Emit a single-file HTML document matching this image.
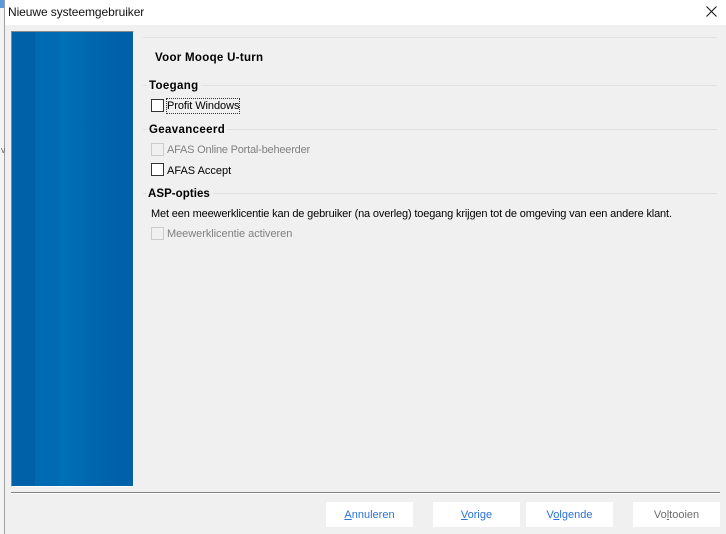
<!DOCTYPE html>
<html><head><meta charset="utf-8">
<style>
html,body{margin:0;padding:0;width:726px;height:534px;overflow:hidden;background:#fff}
body{position:relative;font-family:"Liberation Sans",sans-serif;font-size:11px;color:#000}
.a{position:absolute;white-space:nowrap;line-height:14px}
.l{position:absolute;background:#e0e0e0;height:1px}
.b{font-weight:bold;font-size:11.5px;letter-spacing:.35px}
.g{color:#808080}
.c{position:absolute;width:11px;height:11px;border:1px solid #333;background:#fff}
.c.d{border-color:#ccc;background:#f0f0f0}
.btn{position:absolute;top:502px;width:87px;height:25px;background:#fff;text-align:center;line-height:26px;color:#2a72d8}
u{text-underline-offset:1px}
</style></head><body>
<div style="position:absolute;left:0;top:0;width:4px;height:534px;background:#f4f4f4"></div>
<div style="position:absolute;left:0;top:0;width:4px;height:8px;background:#5a9be0"></div>
<div style="position:absolute;left:4px;top:0;width:1px;height:534px;background:#a0a0a0"></div>
<div class="a" style="left:1px;top:143px;font-size:9px;color:#666">v</div>
<div class="a" style="left:8px;top:5px;font-size:12px;color:#111;letter-spacing:-.08px">Nieuwe systeemgebruiker</div>
<svg style="position:absolute;left:706px;top:6px" width="11" height="11" viewBox="0 0 11 11"><path d="M.5.5l10 10M10.5.5l-10 10" stroke="#111" stroke-width="1" fill="none"/></svg>
<div style="position:absolute;left:5px;top:25px;width:721px;height:509px;background:#f0f0f0"></div>
<div style="position:absolute;left:11px;top:31px;width:121px;height:454px;border-top:1px solid #888;border-left:1px solid #888;border-right:1px solid #fff;border-bottom:1px solid #fff;background:linear-gradient(90deg,#0060a8 0,#0060a8 23px,#006ab2 23px,#006ab2 47px,#0071b8 47px,#0068b0 75px,#0060a8 110px,#0060a8 121px)"></div>
<div class="l" style="left:143px;top:37px;width:574px"></div>
<div class="a b" style="left:155px;top:51px;letter-spacing:.3px">Voor Mooqe U-turn</div>
<div class="a b" style="left:149px;top:79px">Toegang</div>
<div class="l" style="left:201px;top:85px;width:516px"></div>
<div class="l" style="left:143px;top:85px;width:4px"></div>
<div class="c" style="left:151px;top:99px"></div>
<div class="a" style="left:167px;top:99px;outline:1px dotted #333;width:72px;letter-spacing:-.07px">Profit Windows</div>
<div class="a b" style="left:149px;top:123px">Geavanceerd</div>
<div class="l" style="left:227px;top:129px;width:490px"></div>
<div class="l" style="left:143px;top:129px;width:4px"></div>
<div class="c d" style="left:151px;top:143px"></div>
<div class="a g" style="left:167px;top:143px;letter-spacing:-.2px">AFAS Online Portal-beheerder</div>
<div class="c" style="left:151px;top:163px"></div>
<div class="a" style="left:167px;top:164px">AFAS Accept</div>
<div class="a b" style="left:148px;top:187px;letter-spacing:.05px">ASP-opties</div>
<div class="l" style="left:213px;top:193px;width:504px"></div>
<div class="l" style="left:143px;top:193px;width:4px"></div>
<div class="a" style="left:151px;top:207px;letter-spacing:-.15px">Met een meewerklicentie kan de gebruiker (na overleg) toegang krijgen tot de omgeving van een andere klant.</div>
<div class="c d" style="left:151px;top:227px"></div>
<div class="a g" style="left:167px;top:227px;letter-spacing:-.05px">Meewerklicentie activeren</div>
<div style="position:absolute;left:11px;top:492px;width:709px;height:1px;background:#808080"></div>
<div style="position:absolute;left:11px;top:493px;width:709px;height:1px;background:#fff"></div>
<div class="btn" style="left:326px"><u>A</u>nnuleren</div>
<div class="btn" style="left:433px"><u>V</u>orige</div>
<div class="btn" style="left:526px">V<u>o</u>lgende</div>
<div class="btn" style="left:633px;color:#6d6d6d">Vo<u>l</u>tooien</div>
</body></html>
